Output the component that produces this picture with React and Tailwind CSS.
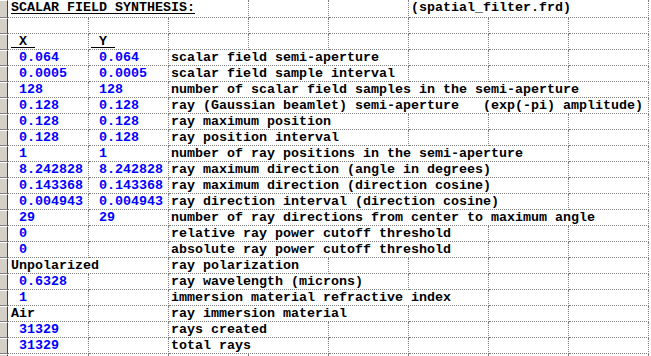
import React from "react";

const BLUE = "blue";
const TEXT = "text";

// each row: list of [span, text, kind]
const rows = [
  [[3, "SCALAR FIELD SYNTHESIS:", "title"], [1], [1], [3, "(spatial_filter.frd)", TEXT]],
  [[1], [1], [1], [1], [1], [1], [1], [1]],
  [[1, " X ", "head"], [1, " Y ", "head"], [1], [1], [1], [1], [1], [1]],
  [[1, " 0.064", BLUE], [1, " 0.064", BLUE], [3, "scalar field semi-aperture", TEXT], [1], [1], [1]],
  [[1, " 0.0005", BLUE], [1, " 0.0005", BLUE], [3, "scalar field sample interval", TEXT], [1], [1], [1]],
  [[1, " 128", BLUE], [1, " 128", BLUE], [6, "number of scalar field samples in the semi-aperture", TEXT]],
  [[1, " 0.128", BLUE], [1, " 0.128", BLUE], [6, "ray (Gaussian beamlet) semi-aperture   (exp(-pi) amplitude)", TEXT]],
  [[1, " 0.128", BLUE], [1, " 0.128", BLUE], [3, "ray maximum position", TEXT], [1], [1], [1]],
  [[1, " 0.128", BLUE], [1, " 0.128", BLUE], [3, "ray position interval", TEXT], [1], [1], [1]],
  [[1, " 1", BLUE], [1, " 1", BLUE], [5, "number of ray positions in the semi-aperture", TEXT], [1]],
  [[1, " 8.242828", BLUE], [1, " 8.242828", BLUE], [5, "ray maximum direction (angle in degrees)", TEXT], [1]],
  [[1, " 0.143368", BLUE], [1, " 0.143368", BLUE], [5, "ray maximum direction (direction cosine)", TEXT], [1]],
  [[1, " 0.004943", BLUE], [1, " 0.004943", BLUE], [5, "ray direction interval (direction cosine)", TEXT], [1]],
  [[1, " 29", BLUE], [1, " 29", BLUE], [6, "number of ray directions from center to maximum angle", TEXT]],
  [[1, " 0", BLUE], [1], [4, "relative ray power cutoff threshold", TEXT], [1], [1]],
  [[1, " 0", BLUE], [1], [4, "absolute ray power cutoff threshold", TEXT], [1], [1]],
  [[2, "Unpolarized", TEXT], [2, "ray polarization", TEXT], [1], [1], [1], [1]],
  [[1, " 0.6328", BLUE], [1], [3, "ray wavelength (microns)", TEXT], [1], [1], [1]],
  [[1, " 1", BLUE], [1], [4, "immersion material refractive index", TEXT], [1], [1]],
  [[1, "Air", TEXT], [1], [3, "ray immersion material", TEXT], [1], [1], [1]],
  [[1, " 31329", BLUE], [1], [2, "rays created", TEXT], [1], [1], [1], [1]],
  [[1, " 31329", BLUE], [1], [2, "total rays", TEXT], [1], [1], [1], [1]],
  [[1], [1], [1], [1], [1], [1], [1], [1]],
];

const spanClass = {
  1: "col-span-1",
  2: "col-span-2",
  3: "col-span-3",
  4: "col-span-4",
  5: "col-span-5",
  6: "col-span-6",
};

const Cell = ({ span, text, kind, first }) => {
  let tone = "text-black";
  if (kind === BLUE) tone = "text-[#0000ff]";
  const deco = kind === "title" || kind === "head" ? "underline underline-offset-[2px] decoration-1" : "";
  return (
    <div
      className={`${spanClass[span]} ${first ? "pl-[3px]" : "pl-[2px]"} border-r border-b border-dotted border-[#808080] whitespace-pre overflow-visible ${tone}`}
    >
      {text && <span className={deco}>{text}</span>}
    </div>
  );
};

const App = () => {
  return (
    <div className="w-[651px] h-[356px] overflow-hidden bg-white font-['Liberation_Mono',monospace] font-bold text-[13.33px] leading-[15px]">
      {rows.map((row, i) => (
        <div
          key={i}
          className={`grid grid-cols-[8px_81px_repeat(7,80px)] ${i === 0 ? "h-[18px]" : "h-[16px]"}`}
        >
          <div className="bg-[#d4d0c8] border-r border-r-[#404040] border-b border-b-[#808080] border-t border-t-white" />
          {row.map((c, j) => (
            <Cell key={j} span={c[0]} text={c[1]} kind={c[2]} first={j === 0 && row[0][0] !== undefined && true} />
          ))}
        </div>
      ))}
    </div>
  );
};

export default App;
